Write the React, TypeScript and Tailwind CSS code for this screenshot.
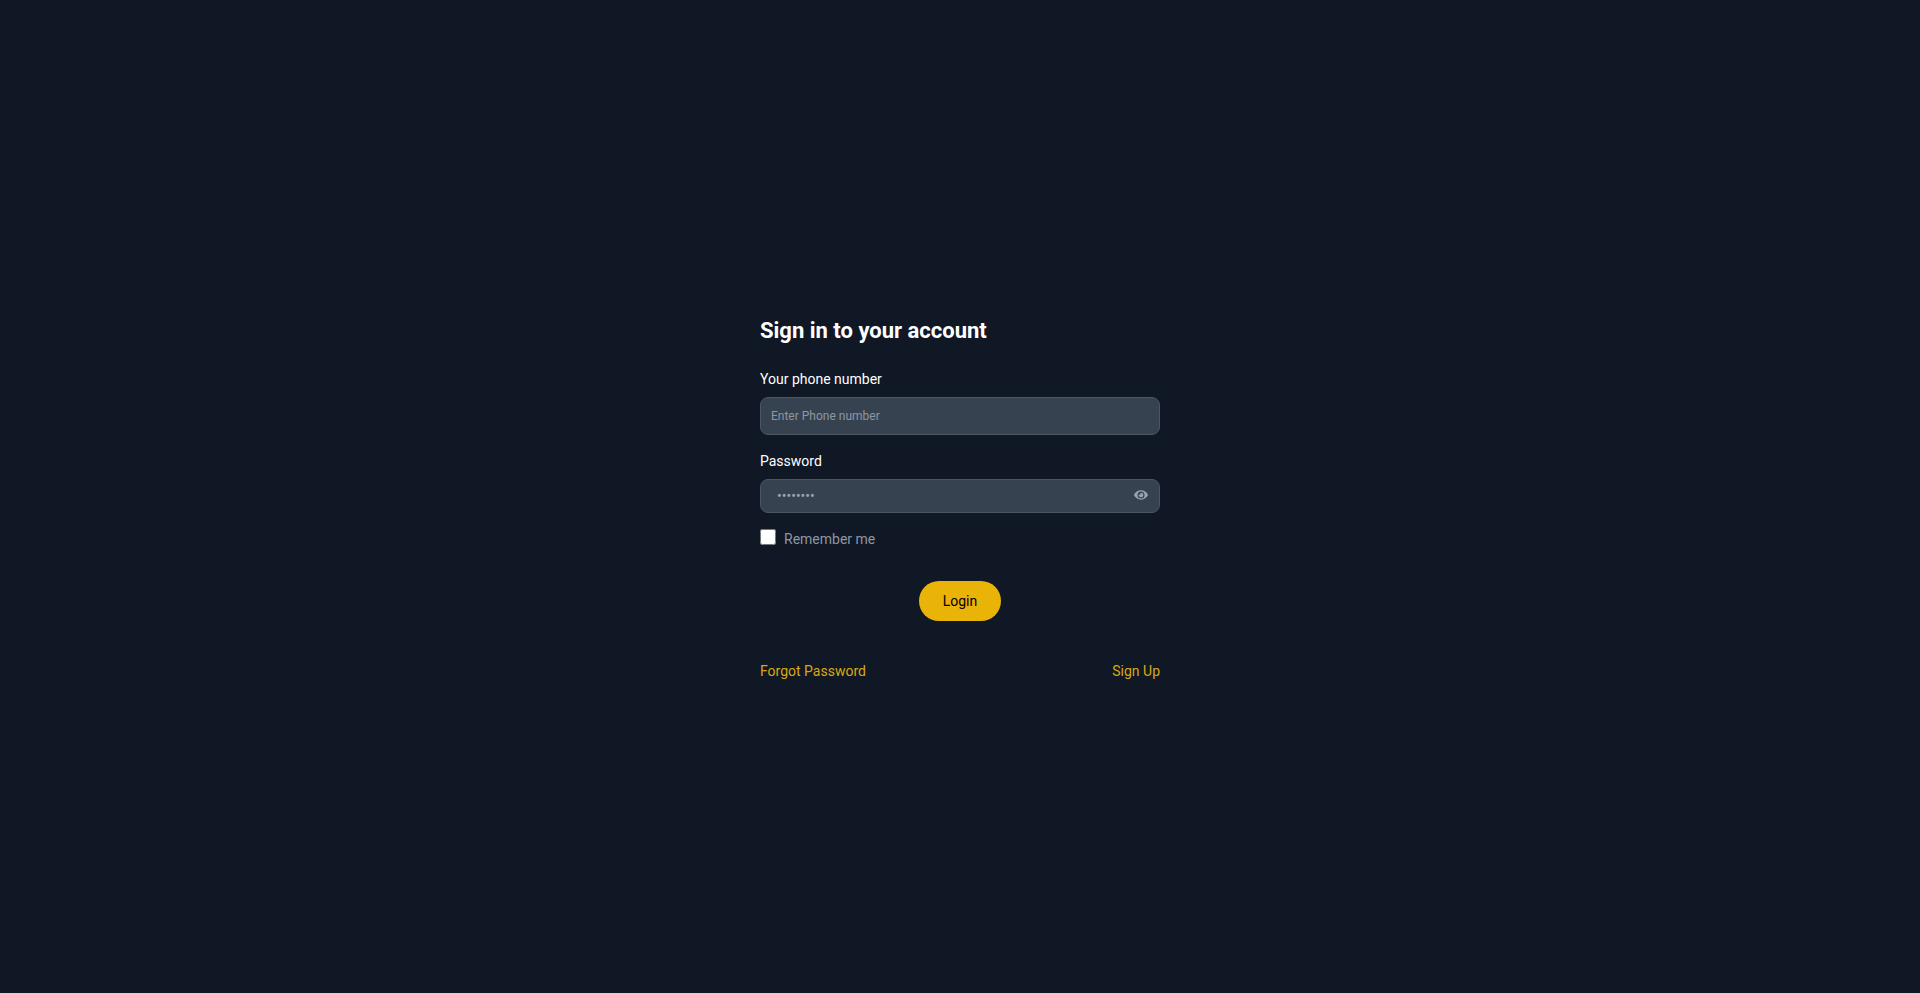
import { useState } from 'react';
import { FaEye, FaEyeSlash } from 'react-icons/fa';

export default function App() {
  const [showPassword, setShowPassword] = useState(false);

  return (
    <main className="flex min-h-screen items-center justify-center bg-[#101826] font-['Roboto',sans-serif] text-sm text-white">
      <div className="w-full max-w-[400px]">
        <h1 className="mb-5 text-[22px] font-bold leading-9">Sign in to your account</h1>
        <form onSubmit={(e) => e.preventDefault()}>
          <div className="mb-4">
            <label htmlFor="phone" className="mb-2 block">
              Your phone number
            </label>
            <input
              id="phone"
              type="tel"
              placeholder="Enter Phone number"
              className="block h-[38px] w-full rounded-lg border border-[#4b5563] bg-[#374250] px-2.5 text-xs text-white placeholder:text-[#8d96a3]"
            />
          </div>
          <div className="mb-4">
            <label htmlFor="password" className="mb-2 block">
              Password
            </label>
            <div className="relative">
              <input
                id="password"
                type={showPassword ? 'text' : 'password'}
                placeholder="••••••••"
                className="block h-[34px] w-full rounded-lg border border-[#4b5563] bg-[#374250] px-4 text-sm text-white placeholder:text-[#9ca3af]"
              />
              <button
                type="button"
                aria-label="Show password"
                onClick={() => setShowPassword(!showPassword)}
                className="absolute inset-y-0 right-0 flex items-center px-3 pb-0.5 text-[#9ca3af]"
              >
                {showPassword ? <FaEyeSlash size={14} /> : <FaEye size={14} />}
              </button>
            </div>
          </div>
          <div className="flex items-start">
            <input id="remember" type="checkbox" className="h-4 w-4" />
            <label htmlFor="remember" className="ml-2 text-[#8f96a3]">
              Remember me
            </label>
          </div>
          <div className="mt-8 flex justify-center">
            <button type="submit" className="rounded-full bg-[#eab308] px-6 py-2.5 text-black">
              Login
            </button>
          </div>
        </form>
        <div className="mt-10 flex justify-between text-[#d9a810]">
          <a href="#forgot">Forgot Password</a>
          <a href="#signup">Sign Up</a>
        </div>
      </div>
    </main>
  );
}
